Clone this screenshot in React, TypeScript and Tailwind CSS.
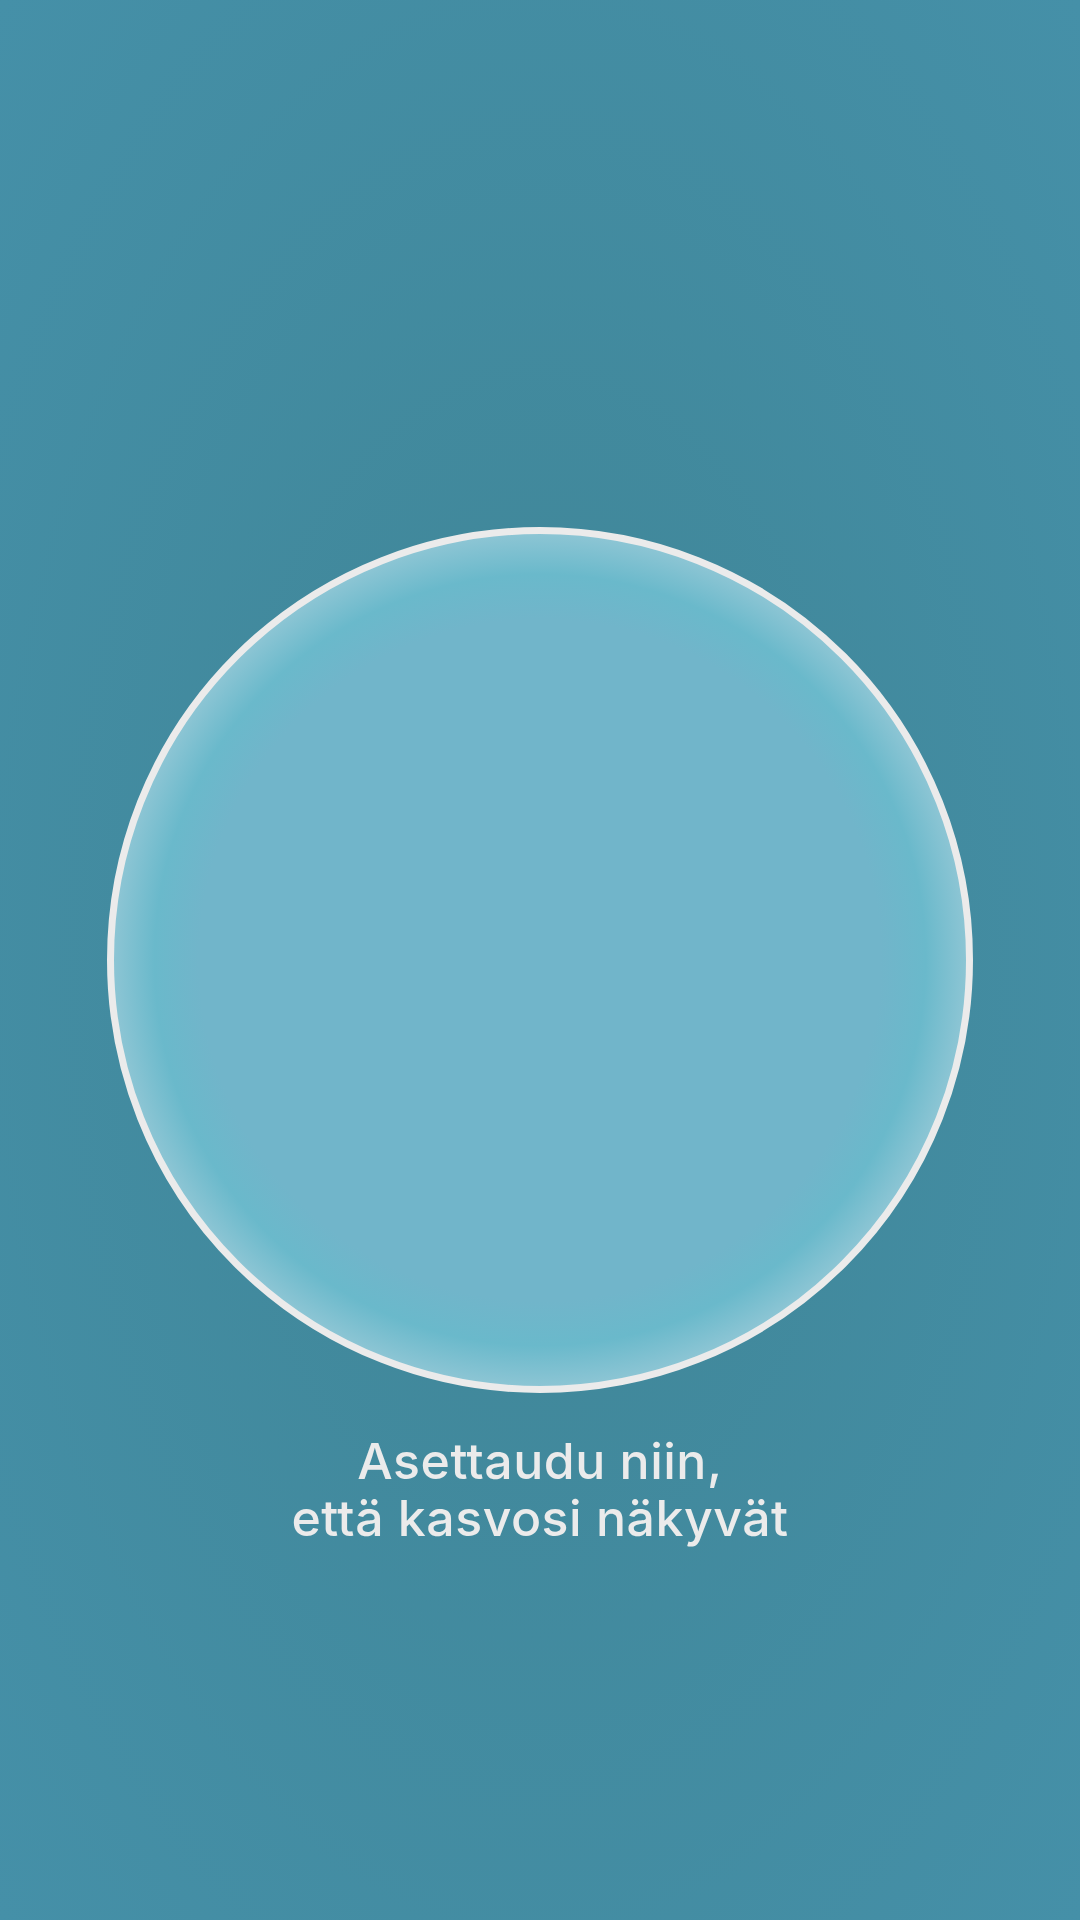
export default function App() {
  return (
    <div className="w-[1080px] h-[1920px] flex flex-col items-center pt-[527px] bg-[radial-gradient(ellipse_at_50%_50%,#3f8596_0%,#4590a8_100%)]">
      <div className="w-[866px] h-[866px] shrink-0 rounded-full border-[7px] border-[#ebebeb] bg-[radial-gradient(circle_closest-side,#71b5ca_0%,#71b5ca_80%,#6ab9cb_90.5%,#8cc5d4_100%)]" />
      <p
        className="mt-[40px] text-center text-[#ebebeb] text-[50px] leading-[57px] font-medium tracking-[0.5px]"
        style={{ fontFamily: 'Inter, "Noto Sans", sans-serif' }}
      >
        Asettaudu niin,
        <br />
        että kasvosi näkyvät
      </p>
    </div>
  );
}
